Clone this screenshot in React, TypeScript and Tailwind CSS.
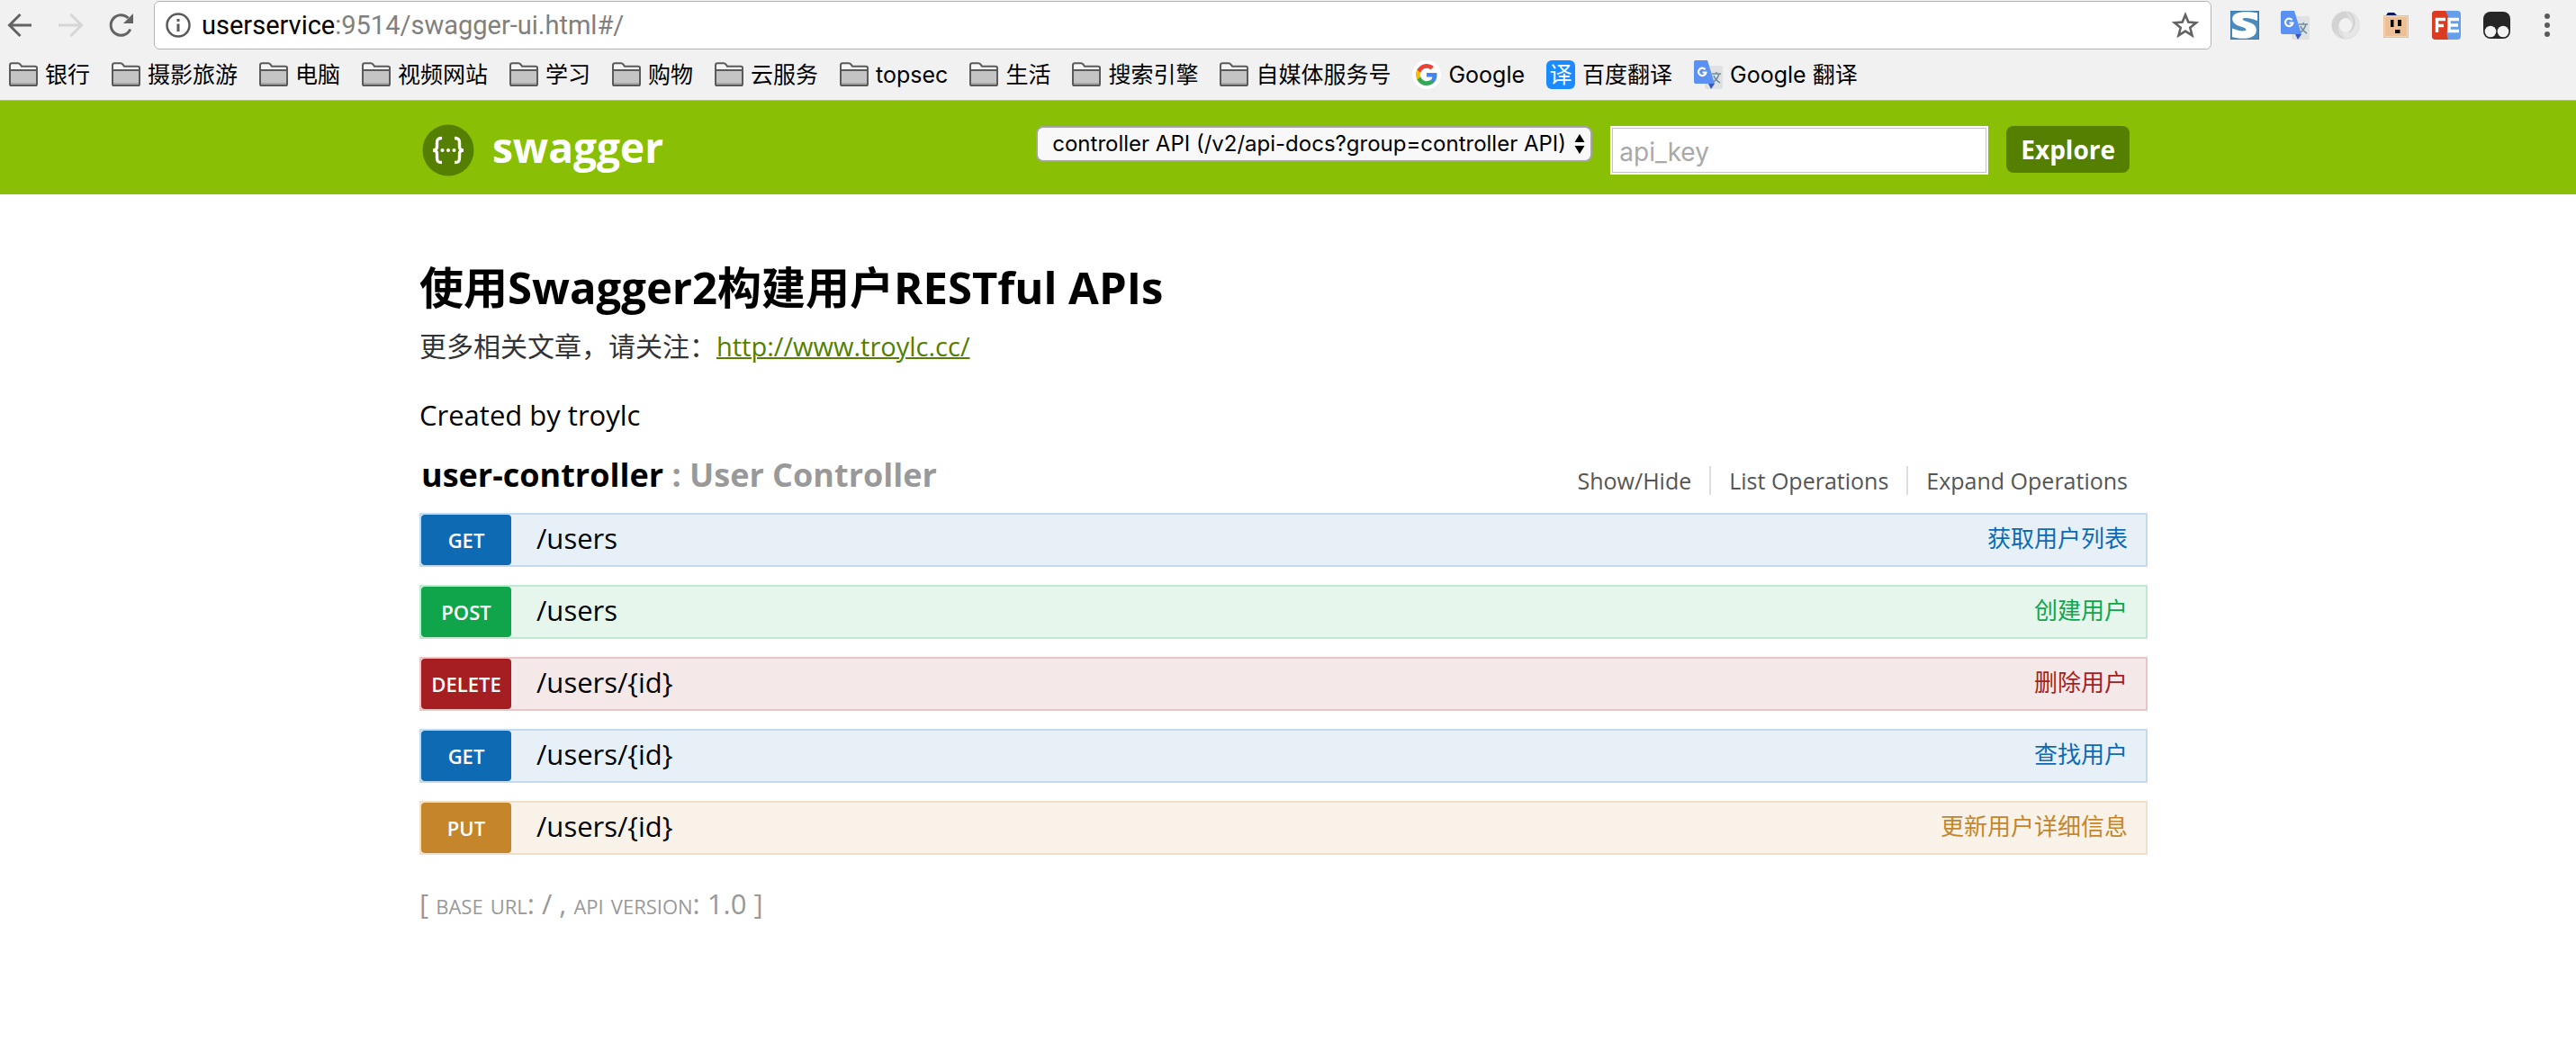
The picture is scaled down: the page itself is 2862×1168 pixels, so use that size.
import React from 'react';

const FOLDERS_BEFORE = ['银行', '摄影旅游', '电脑', '视频网站', '学习', '购物', '云服务', 'topsec', '生活', '搜索引擎', '自媒体服务号'];

type Operation = { method: string; path: string; summary: string; row: string; badge: string; link: string };

const BLUE = { row: 'border-[#c3d9ec] bg-[#e7f0f7]', badge: 'bg-[#0f6ab4]', link: 'text-[#0f6ab4]' };
const GREEN = { row: 'border-[#c3e8d1] bg-[#e7f6ec]', badge: 'bg-[#10a54a]', link: 'text-[#10a54a]' };
const RED = { row: 'border-[#e8c6c7] bg-[#f5e8e8]', badge: 'bg-[#a41e22]', link: 'text-[#a41e22]' };
const OCHRE = { row: 'border-[#f0e0ca] bg-[#f9f2e9]', badge: 'bg-[#c5862b]', link: 'text-[#c5862b]' };

const OPERATIONS: Operation[] = [
  { method: 'GET', path: '/users', summary: '获取用户列表', ...BLUE },
  { method: 'POST', path: '/users', summary: '创建用户', ...GREEN },
  { method: 'DELETE', path: '/users/{id}', summary: '删除用户', ...RED },
  { method: 'GET', path: '/users/{id}', summary: '查找用户', ...BLUE },
  { method: 'PUT', path: '/users/{id}', summary: '更新用户详细信息', ...OCHRE },
];

function FolderIcon() {
  return (
    <svg width="32" height="34" viewBox="0 0 32 34" fill="none" aria-hidden="true">
      <path d="M1 28V6.500Q1 4.200 3.300 4.200H10Q11.500 4.200 12.300 5.300L14 7.700H29Q31 7.700 31 9.500V28Q31 29 29.500 29H2.500Q1 29 1 28Z" fill="#f6f6f6" stroke="#5a5a5a" strokeWidth="2" />
      <path d="M2 12H30V28H2Z" fill="#c4c4c4" />
      <path d="M2 26H30V28H2Z" fill="#a6a6a6" />
      <path d="M1 12H31M1 29H31" stroke="#5a5a5a" strokeWidth="2" />
    </svg>
  );
}

function GoogleIcon() {
  return (
    <svg width="32" height="32" viewBox="0 0 32 32" aria-hidden="true">
      <circle cx="16" cy="16" r="16" fill="#fff" />
      <g transform="translate(4 4)">
        <path fill="#4285F4" d="M23.500 12.300c0-.8-.1-1.600-.2-2.300H12v4.500h6.500a5.500 5.500 0 0 1-2.400 3.600v3h3.900c2.200-2.100 3.500-5.200 3.500-8.800z" />
        <path fill="#34A853" d="M12 24c3.200 0 6-1.100 8-2.900l-3.900-3c-1.100.7-2.500 1.200-4.100 1.200-3.100 0-5.800-2.100-6.700-5H1.300v3.100A12 12 0 0 0 12 24z" />
        <path fill="#FBBC05" d="M5.300 14.300a7.200 7.200 0 0 1 0-4.600V6.600h-4a12 12 0 0 0 0 10.800z" />
        <path fill="#EA4335" d="M12 4.800c1.800 0 3.300.6 4.600 1.800L20 3.100A12 12 0 0 0 1.300 6.600l4 3.100c.9-2.800 3.600-4.900 6.700-4.900z" />
      </g>
    </svg>
  );
}

function BaiduTranslateIcon() {
  return (
    <span aria-hidden="true" className="flex size-8 items-center justify-center rounded-md bg-[#1a8cff] text-[25px] leading-8 text-white">
      译
    </span>
  );
}

function TranslateIcon() {
  return (
    <svg width="32" height="32" viewBox="0 0 32 32" aria-hidden="true">
      <rect x="12" y="6" width="20" height="26" rx="2" fill="#dfe1e3" />
      <path d="M20 15H30M25 13V15M28 15Q26 22 20 25M22 17Q24 22 29 25" fill="none" stroke="#6f8fa0" strokeWidth="1.600" />
      <path d="M16 26H23L19 32Z" fill="#3457c8" />
      <path d="M2 0H15L23 26H2Q0 26 0 24V2Q0 0 2 0Z" fill="#5a91f2" />
      <path d="M12.500 10.200A4.200 4.200 0 1 0 13.400 13.500H9.500" fill="none" stroke="#fff" strokeWidth="2.200" />
    </svg>
  );
}

function SIcon() {
  return (
    <svg width="32" height="32" viewBox="0 0 32 32" aria-hidden="true">
      <rect x="0.500" y="0.500" width="31" height="31" fill="#4b8abc" stroke="#3b7cb0" />
      <path d="M30 2.500C20 .8 5 0 2.500 7C.8 14 8 16.500 14.500 18.500C19 20 18 22.500 14 22.500C9.500 22.500 6 21 2 19.500V29C10 31.500 26 32.500 28.500 24C30.500 16 24 13.500 17 11.500C12 10 13 8 17 8C22 8 26 9.500 30 11Z" fill="#fff" />
    </svg>
  );
}

function RingIcon() {
  return (
    <svg width="32" height="32" viewBox="0 0 32 32" fill="none" aria-hidden="true">
      <circle cx="16" cy="16" r="11.500" stroke="#dedede" strokeWidth="8.500" />
      <path d="M16 1A15 15 0 0 0 7 28C2 18 6 7 20 8" fill="#d2d2d2" />
      <path d="M16 31A15 15 0 0 0 25 4C30 14 26 25 12 24" fill="#e6e6e6" />
      <path d="M19 1.500C28 7 27 19 20 24M13 30.500C4 25 5 13 12 8" stroke="#c6c6c6" strokeWidth="1" />
      <ellipse cx="16" cy="16" rx="6" ry="8" fill="#f1f1f1" />
    </svg>
  );
}

function BoxFaceIcon() {
  return (
    <svg width="32" height="32" viewBox="0 0 32 32" aria-hidden="true">
      <path d="M5 5L7 2H14L17 5Z" fill="#0b1a5c" />
      <rect x="2" y="5" width="28" height="25" fill="#ecc096" />
      <rect x="3.500" y="6.500" width="25" height="22" fill="none" stroke="#f4d3b1" />
      <path d="M10 10H13.500V18H10ZM18 10H22V17H18ZM15 21H20.500V25H15Z" fill="#0c0805" />
    </svg>
  );
}

function FeIcon() {
  return (
    <svg width="32" height="32" viewBox="0 0 32 32" aria-hidden="true">
      <rect width="32" height="32" rx="4" fill="#659fe9" />
      <path d="M4 0H15Q20 8 18 17Q15 26 18 32H4Q0 32 0 28V4Q0 0 4 0Z" fill="#dd3a22" />
      <path d="M5.500 24V9.500H15M5.500 16.500H13M30 9.500H19V22.500H30M19 16H29" fill="none" stroke="#fff" strokeWidth="3.400" />
    </svg>
  );
}

function MaskIcon() {
  return (
    <svg width="32" height="32" viewBox="0 0 32 32" aria-hidden="true">
      <rect x="1" y="1" width="30" height="30" rx="8" fill="#262626" />
      <circle cx="9" cy="23" r="6.300" fill="#f3f3f3" />
      <circle cx="23" cy="23" r="6.300" fill="#f3f3f3" />
    </svg>
  );
}

function SwaggerMark() {
  return (
    <svg width="58" height="58" viewBox="0 0 58 58" fill="none" aria-hidden="true">
      <circle cx="29" cy="29" r="28.500" fill="#547f00" />
      <path d="M22 15.500C17 15.500 16.500 17.500 16.500 21V25C16.500 28 15 29 12 29C15 29 16.500 30 16.500 33V37C16.500 41 17 42.500 22 42.500M36 15.500C41 15.500 41.500 17.500 41.500 21V25C41.500 28 43 29 46 29C43 29 41.500 30 41.500 33V37C41.500 41 41 42.500 36 42.500" stroke="#fff" strokeWidth="3.400" />
      <circle cx="22.500" cy="29" r="2" fill="#fff" />
      <circle cx="29" cy="29" r="2" fill="#fff" />
      <circle cx="35.500" cy="29" r="2" fill="#fff" />
    </svg>
  );
}

function Bookmark({ label, icon }: { label: string; icon: React.ReactNode }) {
  return (
    <a href="#" className="flex shrink-0 items-center gap-2">
      {icon}
      <span>{label}</span>
    </a>
  );
}

function BrowserBar() {
  const extensions: [string, React.ReactNode][] = [
    ['Stylish', <SIcon />],
    ['Translate', <TranslateIcon />],
    ['Ring', <RingIcon />],
    ['Postman', <BoxFaceIcon />],
    ['FE Helper', <FeIcon />],
    ['Tampermonkey', <MaskIcon />],
  ];
  return (
    <div className="border-b border-[#b4b4b4] bg-[#f1f1f1]">
      <div className="flex h-14 items-center pr-5 pl-2">
        <div className="flex items-center gap-6">
          <button type="button" aria-label="Back">
            <svg width="32" height="32" viewBox="0 0 32 32" fill="none" stroke="#636363" strokeWidth="3"><path d="M27 16H3M14.500 4L2.500 16L14.500 28" /></svg>
          </button>
          <button type="button" aria-label="Forward">
            <svg width="32" height="32" viewBox="0 0 32 32" fill="none" stroke="#d6d6d6" strokeWidth="3"><path d="M1 16H26M14.500 4L26.500 16L14.500 28" /></svg>
          </button>
          <button type="button" aria-label="Reload">
            <svg width="32" height="32" viewBox="0 0 32 32" fill="none"><path d="M24.800 20.500A11.300 11.300 0 1 1 22.500 8" stroke="#636363" strokeWidth="3" /><path d="M28 3V14H17Z" fill="#636363" /></svg>
          </button>
        </div>
        <div className="ml-[19px] flex h-[54px] flex-1 items-center rounded-md border border-[#b4b4b4] bg-white pr-3 pl-3">
          <svg width="28" height="28" viewBox="0 0 28 28" aria-hidden="true">
            <circle cx="14" cy="14" r="12.500" fill="none" stroke="#5a5a5a" strokeWidth="2.500" />
            <path d="M12.500 7H15.500V10H12.500ZM12.500 12.500H15.500V21H12.500Z" fill="#5a5a5a" />
          </svg>
          <div role="textbox" aria-label="Address" className="ml-3 flex-1 font-[Roboto,sans-serif] text-[29px] leading-10 text-[#808080]">
            <span className="text-black">userservice</span>:9514/swagger-ui.html#/
          </div>
          <button type="button" aria-label="Bookmark this page">
            <svg width="32" height="32" viewBox="0 0 32 32" fill="none" stroke="#636363" strokeWidth="2.600"><path d="M16 4.500L19.300 12.600L28 13.200L21.300 18.800L23.500 27.300L16 22.600L8.500 27.300L10.700 18.800L4 13.200L12.700 12.600Z" /></svg>
          </button>
        </div>
        <div className="ml-[21px] flex items-center gap-6">
          {extensions.map(([name, icon]) => (
            <button key={name} type="button" aria-label={name}>{icon}</button>
          ))}
          <button type="button" aria-label="Menu" className="ml-1">
            <svg width="24" height="32" viewBox="0 0 24 32" fill="#5a5a5a"><circle cx="12" cy="6" r="3" /><circle cx="12" cy="16" r="3" /><circle cx="12" cy="26" r="3" /></svg>
          </button>
        </div>
      </div>
      <nav aria-label="Bookmarks" className="flex h-[55px] items-center gap-6 overflow-hidden pb-px pl-[10px] font-[Inter,'Noto_Sans_CJK_SC',sans-serif] text-[25px] leading-8 whitespace-nowrap text-black">
        {FOLDERS_BEFORE.map((label) => (
          <Bookmark key={label} label={label} icon={<FolderIcon />} />
        ))}
        <Bookmark label="Google" icon={<GoogleIcon />} />
        <Bookmark label="百度翻译" icon={<BaiduTranslateIcon />} />
        <Bookmark label="Google 翻译" icon={<TranslateIcon />} />
      </nav>
    </div>
  );
}

function SwaggerHeader() {
  return (
    <header className="bg-[#89bf04] pr-[10px]">
      <form className="mx-auto flex h-[104px] max-w-[1920px] items-start pt-7 pr-5" onSubmit={(e) => e.preventDefault()}>
        <a href="#" className="-mt-[3px] flex items-center gap-5 pl-[3px] text-[46px] leading-[52px] font-bold text-white">
          <SwaggerMark />
          <span className="pb-2">swagger</span>
        </a>
        <div className="ml-auto flex items-start gap-5">
          <div className="relative">
            <select aria-label="API group" className="block h-10 w-[618px] appearance-none rounded-lg border-2 border-[#a6a6a6] bg-[#f8f8f8] pl-4 font-[Inter,sans-serif] text-[24px] leading-8 text-black">
              <option>controller API (/v2/api-docs?group=controller API)</option>
            </select>
            <svg className="pointer-events-none absolute top-[9px] right-2" width="12" height="22" viewBox="0 0 12 22" aria-hidden="true"><path d="M6 0L11.500 9H.5ZM6 22L11.500 13H.5Z" fill="#000" /></svg>
          </div>
          <input aria-label="api_key" placeholder="api_key" className="h-[54px] w-[420px] border-2 border-white bg-white px-2 pt-1 font-[Inter,sans-serif] text-[28px] text-black inset-ring inset-ring-[#c4c4c4] placeholder:text-[#a9a9a9]" />
          <button type="submit" className="h-[52px] rounded-lg bg-[#547f00] px-4 text-[28px] leading-[52px] font-bold text-white">Explore</button>
        </div>
      </form>
    </header>
  );
}

export default function App() {
  return (
    <div className="min-h-screen bg-white font-['Open_Sans','Noto_Sans_CJK_SC',sans-serif] text-black">
      <BrowserBar />
      <SwaggerHeader />
      <main className="pr-[10px]">
        <div className="mx-auto max-w-[1920px] pt-[73px]">
          <h1 className="text-[49px] leading-[60px] font-bold">使用Swagger2构建用户RESTful APIs</h1>
          <p className="mt-4 text-[30px] leading-10 text-[#333]">
            更多相关文章，请关注：<a href="#" className="text-[29px] text-[#547f00] underline decoration-2">http://www.troylc.cc/</a>
          </p>
          <p className="mt-9 text-[31px] leading-10">Created by troylc</p>
          <section>
            <div className="mt-[22px] flex items-center justify-between pr-[22px] pl-[2px]">
              <h2 className="text-[36px] leading-[50px] font-bold text-[#999]">
                <a href="#" className="text-black">user-controller</a> : User Controller
              </h2>
              <ul className="mt-3 flex divide-x-2 divide-[#ddd] text-[25px] leading-8 text-[#555]">
                <li className="pr-5"><a href="#">Show/Hide</a></li>
                <li className="px-5"><a href="#">List Operations</a></li>
                <li className="pl-5"><a href="#">Expand Operations</a></li>
              </ul>
            </div>
            <ul className="mt-[17px] flex flex-col gap-5">
              {OPERATIONS.map((op) => (
                <li key={op.method + op.path} className={`flex h-[60px] items-center border-2 pr-5 ${op.row}`}>
                  <a href="#" className={`w-[100px] rounded-[4px] text-center text-[22px] leading-[56px] font-semibold text-white ${op.badge}`}>{op.method}</a>
                  <a href="#" className="ml-7 pb-1 text-[31px] leading-10">{op.path}</a>
                  <a href="#" className={`ml-auto pb-1 text-[26px] leading-10 ${op.link}`}>{op.summary}</a>
                </li>
              ))}
            </ul>
          </section>
          <footer className="mt-[34px] pb-10 text-[31px] leading-10 text-[#999] [font-variant:small-caps]">
            [ base url: / , api version: 1.0 ]
          </footer>
        </div>
      </main>
    </div>
  );
}
